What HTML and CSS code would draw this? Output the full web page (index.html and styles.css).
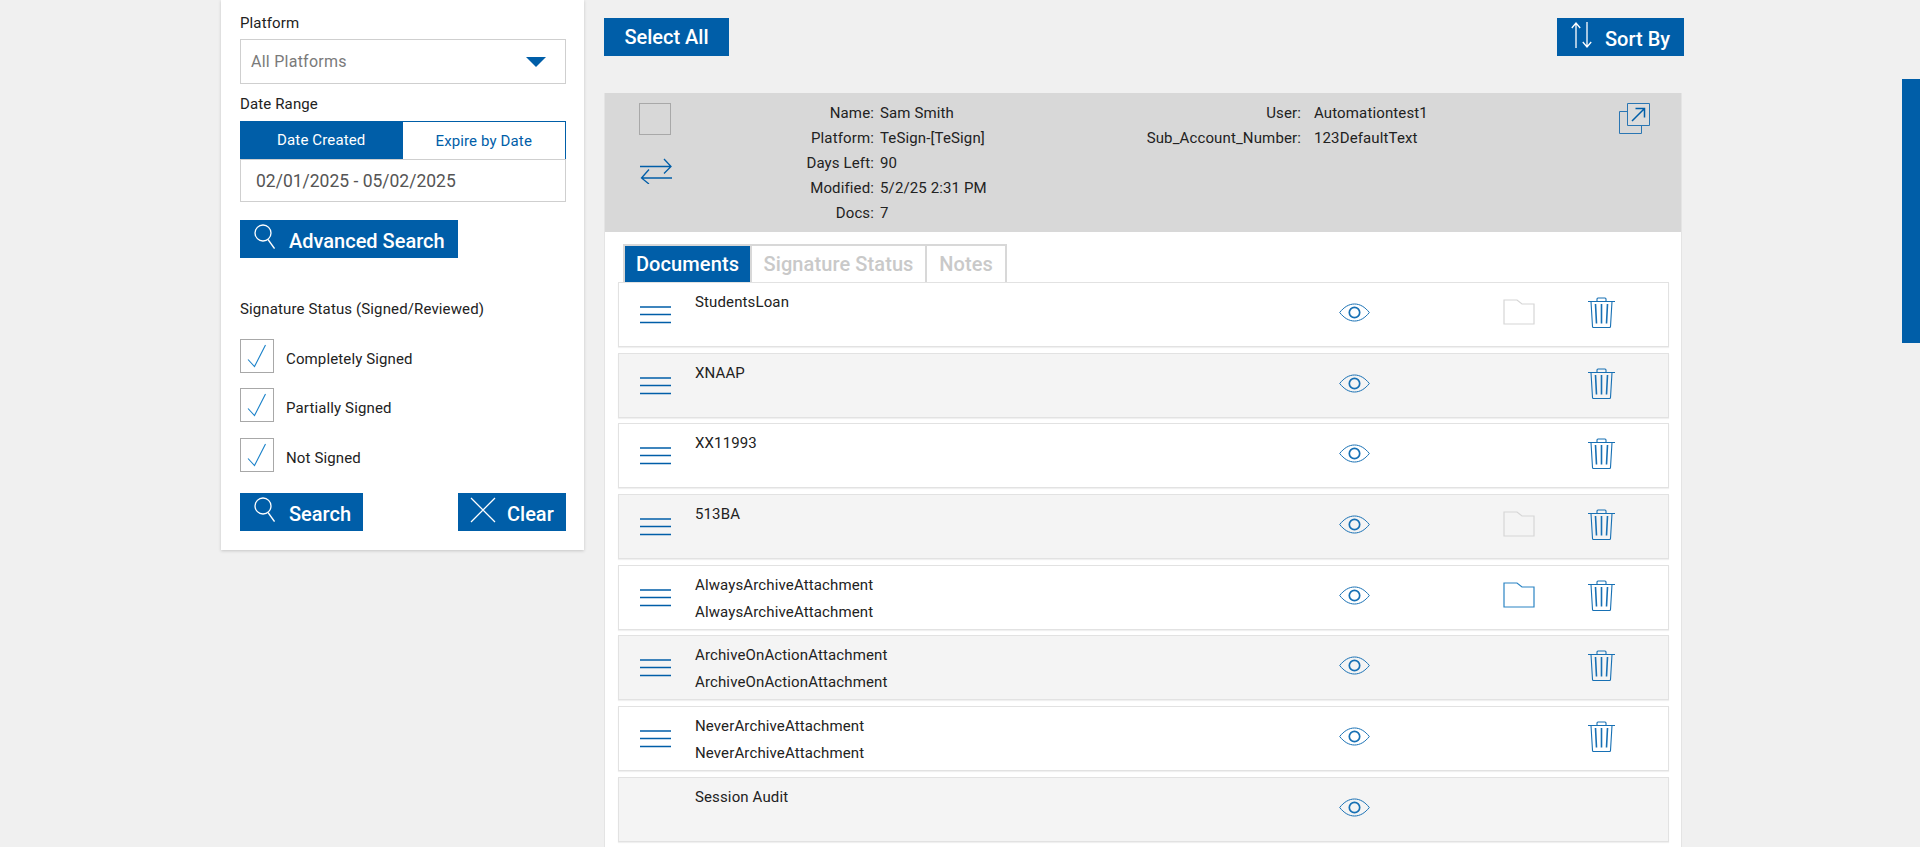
FILE: index.html
```html
<!DOCTYPE html>
<html lang="en">
<head>
<meta charset="utf-8">
<title>Documents</title>
<link rel="stylesheet" href="styles.css">
</head>
<body>
<svg class="sprite" width="0" height="0" aria-hidden="true">
  <symbol id="i-search" viewBox="0 0 21 25"><circle cx="9" cy="9" r="8" fill="none" stroke="currentColor" stroke-width="1.3"/><path d="M14 15.500l6.500 9" fill="none" stroke="currentColor" stroke-width="1.3"/></symbol>
  <symbol id="i-check" viewBox="0 0 20 24"><path d="M1 15.5l6.5 7L18.5 1" fill="none" stroke="currentColor" stroke-width="1.1"/></symbol>
  <symbol id="i-menu" viewBox="0 0 31 18"><path d="M0 1h31M0 8.500h31M0 16.500h31" fill="none" stroke="currentColor" stroke-width="1.6"/></symbol>
  <symbol id="i-eye" viewBox="0 0 31 19"><path d="M.7 9.500C5 4 10 1 15.500 1S26 4 30.300 9.500C26 15 21 18 15.500 18S5 15 .7 9.500z" fill="none" stroke="currentColor" stroke-width="1"/><circle cx="15.500" cy="9.500" r="5.200" fill="none" stroke="currentColor" stroke-width="1.700"/></symbol>
  <symbol id="i-folder" viewBox="0 0 32 26"><path d="M1 25V1h13l5 4h12v20z" fill="none" stroke="currentColor" stroke-width="1.200"/></symbol>
  <symbol id="i-trash" viewBox="0 0 27 31"><path d="M0 4.500h27M9 4.500V2q0-1 1-1h7q1 0 1 1v2.500M3 4.500l1.500 25q0 1 1 1h16q1 0 1-1l1.500-25" fill="none" stroke="currentColor" stroke-width="1.100"/><path d="M7.500 7l1 19.500M13.500 7v19.500M19.500 7l-1 19.500" fill="none" stroke="currentColor" stroke-width="1.600"/></symbol>
</svg>

<div class="page">
  <aside class="panel">
    <div class="panel-label label-platform">Platform</div>
    <div class="select">
      <span>All Platforms</span>
      <span class="caret"></span>
    </div>
    <div class="panel-label label-range">Date Range</div>
    <div class="segment">
      <span class="seg seg-on">Date Created</span>
      <span class="seg seg-off">Expire by Date</span>
    </div>
    <div class="date-field">02/01/2025 - 05/02/2025</div>
    <a class="btn btn-adv"><svg class="ico-search"><use href="#i-search"/></svg><span>Advanced Search</span></a>

    <div class="panel-label label-sig">Signature Status (Signed/Reviewed)</div>
    <div class="check-row check-1"><span class="check"><svg class="ico-check"><use href="#i-check"/></svg></span><span class="check-text">Completely Signed</span></div>
    <div class="check-row check-2"><span class="check"><svg class="ico-check"><use href="#i-check"/></svg></span><span class="check-text">Partially Signed</span></div>
    <div class="check-row check-3"><span class="check"><svg class="ico-check"><use href="#i-check"/></svg></span><span class="check-text">Not Signed</span></div>

    <div class="panel-actions">
      <a class="btn btn-search"><svg class="ico-search"><use href="#i-search"/></svg><span>Search</span></a>
      <a class="btn btn-clear"><svg class="ico-clear" viewBox="0 0 26 26"><path d="M1 1l24 24M25 1L1 25" fill="none" stroke="currentColor" stroke-width="1.300"/></svg><span>Clear</span></a>
    </div>
  </aside>

  <main class="main">
    <div class="toolbar">
      <a class="btn btn-all"><span>Select All</span></a>
      <a class="btn btn-sort"><svg class="ico-sort" viewBox="0 0 22 26"><path d="M5 26V1M.8 6L5 1l4.200 5M16 0v25M11.800 20l4.200 5 4.200-5" fill="none" stroke="currentColor" stroke-width="1.300"/></svg><span>Sort By</span></a>
    </div>

    <section class="card">
      <header class="card-head">
        <div class="head-tools">
          <span class="head-check"></span>
          <svg class="ico-swap" viewBox="0 0 32 26"><path d="M0 8.500h31M24 1l7 7.500-7 7M32 20H1.500M9 11.500L1.500 20 9 26" fill="none" stroke="currentColor" stroke-width="1.300"/></svg>
        </div>
        <dl class="fields fields-a">
          <dt>Name:</dt><dd>Sam Smith</dd>
          <dt>Platform:</dt><dd>TeSign-[TeSign]</dd>
          <dt>Days Left:</dt><dd>90</dd>
          <dt>Modified:</dt><dd>5/2/25 2:31 PM</dd>
          <dt>Docs:</dt><dd>7</dd>
        </dl>
        <dl class="fields fields-b">
          <dt>User:</dt><dd>Automationtest1</dd>
          <dt>Sub_Account_Number:</dt><dd>123DefaultText</dd>
        </dl>
        <svg class="ico-open" viewBox="0 0 31 31"><path d="M8.500 8.500H.5v22h22v-9" fill="none" stroke="#2a76b3" stroke-width="1"/><path d="M8.500.5h22v22h-22z" fill="#dcdcdc" stroke="#2a76b3" stroke-width="1"/><path d="M13 18L25.500 5.500M16.500 5.500h9v9" fill="none" stroke="#005ea8" stroke-width="1.500"/></svg>
      </header>

      <nav class="tabs">
        <span class="tab tab-on">Documents</span>
        <span class="tab tab-sig">Signature Status</span>
        <span class="tab tab-notes">Notes</span>
      </nav>

      <div class="rows">
        <article class="row">
          <svg class="ico-menu"><use href="#i-menu"/></svg>
          <div class="doc"><div>StudentsLoan</div></div>
          <svg class="ico-eye"><use href="#i-eye"/></svg>
          <svg class="ico-folder off"><use href="#i-folder"/></svg>
          <svg class="ico-trash"><use href="#i-trash"/></svg>
        </article>
        <article class="row alt">
          <svg class="ico-menu"><use href="#i-menu"/></svg>
          <div class="doc"><div>XNAAP</div></div>
          <svg class="ico-eye"><use href="#i-eye"/></svg>
          <span class="slot"></span>
          <svg class="ico-trash"><use href="#i-trash"/></svg>
        </article>
        <article class="row">
          <svg class="ico-menu"><use href="#i-menu"/></svg>
          <div class="doc"><div>XX11993</div></div>
          <svg class="ico-eye"><use href="#i-eye"/></svg>
          <span class="slot"></span>
          <svg class="ico-trash"><use href="#i-trash"/></svg>
        </article>
        <article class="row alt">
          <svg class="ico-menu"><use href="#i-menu"/></svg>
          <div class="doc"><div>513BA</div></div>
          <svg class="ico-eye"><use href="#i-eye"/></svg>
          <svg class="ico-folder off"><use href="#i-folder"/></svg>
          <svg class="ico-trash"><use href="#i-trash"/></svg>
        </article>
        <article class="row">
          <svg class="ico-menu"><use href="#i-menu"/></svg>
          <div class="doc"><div>AlwaysArchiveAttachment</div><div>AlwaysArchiveAttachment</div></div>
          <svg class="ico-eye"><use href="#i-eye"/></svg>
          <svg class="ico-folder"><use href="#i-folder"/></svg>
          <svg class="ico-trash"><use href="#i-trash"/></svg>
        </article>
        <article class="row alt">
          <svg class="ico-menu"><use href="#i-menu"/></svg>
          <div class="doc"><div>ArchiveOnActionAttachment</div><div>ArchiveOnActionAttachment</div></div>
          <svg class="ico-eye"><use href="#i-eye"/></svg>
          <span class="slot"></span>
          <svg class="ico-trash"><use href="#i-trash"/></svg>
        </article>
        <article class="row">
          <svg class="ico-menu"><use href="#i-menu"/></svg>
          <div class="doc"><div>NeverArchiveAttachment</div><div>NeverArchiveAttachment</div></div>
          <svg class="ico-eye"><use href="#i-eye"/></svg>
          <span class="slot"></span>
          <svg class="ico-trash"><use href="#i-trash"/></svg>
        </article>
        <article class="row alt">
          <span class="slot-menu"></span>
          <div class="doc"><div>Session Audit</div></div>
          <svg class="ico-eye"><use href="#i-eye"/></svg>
        </article>
      </div>
    </section>
  </main>
</div>
<div class="side-tab"></div>
</body>
</html>
```

FILE: styles.css
```css
* { box-sizing: border-box; }
html, body { margin: 0; height: 847px; overflow: hidden; }
body {
  background: #f0f0f0;
  color: #222;
  font-family: Roboto, "Liberation Sans", sans-serif;
  font-size: 15px;
  letter-spacing: .13px;
}
.sprite { position: absolute; }
.page { display: flex; align-items: flex-start; padding-left: 221px; gap: 20px; height: 847px; }

/* Left panel */
.panel {
  width: 363px;
  height: 550px;
  padding: 0 18px 0 19px;
  background: #fff;
  box-shadow: 0 1px 3px rgba(0,0,0,.18);
  flex: none;
}
.panel-label { line-height: 20px; }
.label-platform { padding-top: 13px; height: 39px; }
.select {
  height: 45px;
  border: 1px solid #cfcfcf;
  padding: 0 10px;
  display: flex;
  align-items: center;
  justify-content: space-between;
  font-size: 16px;
  letter-spacing: .25px;
  color: #7a7a7a;
}
.caret {
  width: 0; height: 0;
  margin-right: 9px;
  border-left: 10px solid transparent;
  border-right: 10px solid transparent;
  border-top: 10px solid #005ea8;
}
.label-range { padding-top: 10px; height: 37px; }
.segment { display: flex; height: 38px; border: 1px solid #005ea8; border-bottom: 0; }
.seg { flex: 1; display: flex; align-items: center; justify-content: center; }
.seg-on { background: #005ea8; color: #fff; margin: -1px 0 0 -1px; }
.seg-off { background: #fff; color: #005ea8; }
.date-field {
  height: 43px;
  border: 1px solid #cfcfcf;
  padding-left: 15px;
  display: flex;
  align-items: center;
  font-size: 17.5px;
  letter-spacing: 0;
  color: #555;
}
.btn {
  display: flex;
  align-items: center;
  height: 38px;
  background: #005ea8;
  color: #fff;
  font-weight: 500;
  font-size: 20px;
  letter-spacing: 0;
  flex: none;
}
.btn span { padding-top: 4px; }
.btn-adv { width: 218px; margin-top: 18px; }
.ico-search { width: 21px; height: 25px; margin: 0 0 6px 14px; color: #fff; flex: none; }
.btn-adv span, .btn-search span { margin-left: 14px; }
.label-sig { margin-top: 41px; height: 30px; }
.check-row { display: flex; align-items: center; }
.check-1 { margin-top: 10px; }
.check-2 { margin-top: 15px; }
.check-3 { margin-top: 16px; }
.check {
  width: 34px; height: 34px;
  border: 1px solid #a8a8a8;
  margin-right: 12px;
  display: flex;
  align-items: center;
  justify-content: center;
  background: #fff;
}
.check-text { padding-top: 5px; }
.ico-check { width: 20px; height: 24px; margin-left: -1px; color: #1b82c9; }
.panel-actions { display: flex; justify-content: space-between; margin-top: 21px; }
.btn-search { width: 123px; }
.btn-clear { width: 108px; }
.ico-clear { width: 26px; height: 26px; margin: 0 0 4px 12px; flex: none; }
.btn-clear span { margin-left: 11px; }

/* Main */
.main { width: 1080px; flex: none; }
.toolbar { display: flex; justify-content: space-between; padding-top: 18px; height: 93px; align-items: flex-start; }
.btn-all { width: 125px; justify-content: center; }
.btn-all span { padding-top: 0; }
.btn-sort { width: 127px; }
.ico-sort { width: 22px; height: 26px; margin: 0 0 5px 14px; flex: none; }
.btn-sort span { margin-left: 12px; }

.card {
  width: 1078px;
  height: 760px;
  background: #fff;
  border: 1px solid #e4e4e4;
  border-top: 0;
}
.card-head {
  display: flex;
  align-items: flex-start;
  height: 139px;
  background: #d8d8d8;
  padding-top: 8px;
}
.head-tools { width: 140px; padding: 2px 0 0 34px; flex: none; }
.head-check { display: block; width: 32px; height: 32px; border: 1px solid #a8a8a8; }
.ico-swap { display: block; width: 32px; height: 26px; margin: 23px 0 0 1px; color: #005ea8; }
.fields { display: grid; margin: 0; line-height: 25px; column-gap: 6px; flex: none; }
.fields dt { text-align: right; }
.fields dd { margin: 0; }
.fields-a { grid-template-columns: 129px 170px; }
.fields-b { grid-template-columns: 250px 150px; column-gap: 13px; margin-left: 1px; }
.ico-open { width: 31px; height: 31px; margin: 2px 31px 0 auto; flex: none; }

.tabs {
  display: inline-flex;
  gap: 2px;
  margin: 12px 0 0 18px;
  height: 38px;
  padding: 2px 2px 0;
  background: #d8d8d8;
  vertical-align: top;
}
.tab {
  display: flex;
  align-items: center;
  justify-content: center;
  background: #fff;
  color: #c9c9c9;
  font-size: 20px;
  font-weight: 500;
  letter-spacing: .1px;
}
.tab-on { width: 125px; background: #005ea8; color: #fff; }
.tab-sig { width: 173px; }
.tab-notes { width: 78px; }

.rows { display: flex; flex-direction: column; gap: 5.67px; padding-left: 13px; width: 1064px; }
.row {
  height: 65px;
  display: grid;
  grid-template-columns: 55px 644px 164px 85px 27px;
  align-items: start;
  padding-left: 21px;
  border: 1px solid #e2e2e2;
  box-shadow: 0 1px 1px rgba(0,0,0,.06);
  background: #fff;
}
.row.alt { background: #f4f4f4; }
.ico-menu { width: 31px; height: 18px; margin-top: 23px; color: #005ea8; }
.doc { line-height: 27px; padding-top: 6px; }
.ico-eye { width: 31px; height: 19px; margin-top: 20px; color: #1770b4; }
.ico-folder { width: 32px; height: 26px; margin-top: 16px; color: #2a84c4; }
.ico-folder.off { color: #d6d6d6; }
.ico-trash { width: 27px; height: 31px; margin-top: 14px; color: #1770b4; }

.side-tab {
  position: fixed;
  right: 0;
  top: 79px;
  width: 18px;
  height: 264px;
  background: #005ea8;
}
```
